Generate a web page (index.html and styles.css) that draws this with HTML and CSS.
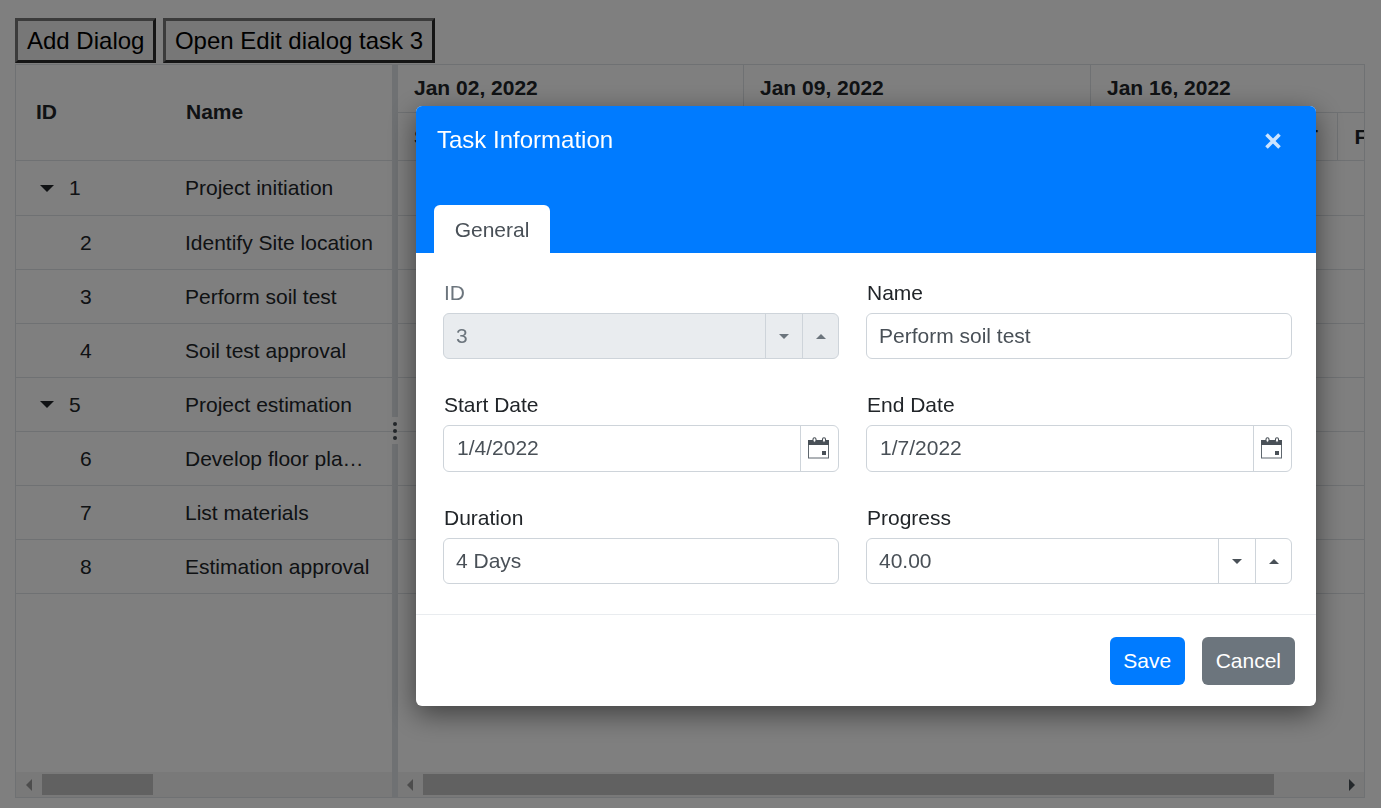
FILE: index.html
```html
<!DOCTYPE html>
<html lang="en">
<head>
    <meta charset="UTF-8">
    <title>Gantt dialog</title>
    <link rel="stylesheet" href="styles.css">
</head>
<body>

    <div class="toolbar">
        <button class="plain-btn">Add Dialog</button>
        <button class="plain-btn">Open Edit dialog task 3</button>
    </div>

    <div class="gantt">
        <div class="tree-panel">
            <div class="tree-head">
                <div class="col-id">ID</div>
                <div class="col-name">Name</div>
            </div>
            <div class="tree-body">
                <div class="tree-row"><div class="col-id parent"><span class="caret"></span>1</div><div class="col-name">Project initiation</div></div>
                <div class="tree-row"><div class="col-id child">2</div><div class="col-name">Identify Site location</div></div>
                <div class="tree-row"><div class="col-id child">3</div><div class="col-name">Perform soil test</div></div>
                <div class="tree-row"><div class="col-id child">4</div><div class="col-name">Soil test approval</div></div>
                <div class="tree-row"><div class="col-id parent"><span class="caret"></span>5</div><div class="col-name">Project estimation</div></div>
                <div class="tree-row"><div class="col-id child">6</div><div class="col-name">Develop floor pla…</div></div>
                <div class="tree-row"><div class="col-id child">7</div><div class="col-name">List materials</div></div>
                <div class="tree-row"><div class="col-id child">8</div><div class="col-name">Estimation approval</div></div>
            </div>
            <div class="scrollbar">
                <span class="arrow-left"></span>
                <div class="thumb thumb-tree"></div>
            </div>
        </div>

        <div class="splitter">
            <div class="split-handle"><i></i><i></i><i></i></div>
        </div>

        <div class="chart-panel">
            <div class="chart-head">
                <div class="weeks">
                    <div class="week">Jan 02, 2022</div>
                    <div class="week">Jan 09, 2022</div>
                    <div class="week">Jan 16, 2022</div>
                </div>
                <div class="days">
                    <div class="day">S</div><div class="day"></div><div class="day"></div><div class="day"></div><div class="day"></div><div class="day"></div><div class="day"></div>
                    <div class="day"></div><div class="day"></div><div class="day"></div><div class="day"></div><div class="day"></div><div class="day"></div><div class="day"></div>
                    <div class="day"></div><div class="day"></div><div class="day"></div><div class="day"></div><div class="day">T</div><div class="day">F</div>
                </div>
            </div>
            <div class="tree-body">
                <div class="tree-row"></div>
                <div class="tree-row"></div>
                <div class="tree-row"></div>
                <div class="tree-row"></div>
                <div class="tree-row"></div>
                <div class="tree-row"></div>
                <div class="tree-row"></div>
                <div class="tree-row"></div>
            </div>
            <div class="scrollbar scrollbar-chart">
                <span class="arrow-left"></span>
                <div class="thumb thumb-chart"></div>
                <span class="arrow-right"></span>
            </div>
        </div>
    </div>

    <div class="overlay">
        <div class="dialog">
            <div class="dialog-header">
                <div class="dialog-title">
                    <span>Task Information</span>
                    <svg class="close-icon" width="18" height="18" viewBox="0 0 18 18"><path d="M2.500 2.500L15.500 15.500M15.500 2.500L2.500 15.500" stroke="#cce4ff" stroke-width="3.6" fill="none"/></svg>
                </div>
                <div class="tab">General</div>
            </div>

            <div class="dialog-body">
                <div class="field">
                    <label class="label-off">ID</label>
                    <div class="input-group group-off">
                        <input type="text" value="3" disabled>
                        <span class="spin"><span class="tri-down"></span></span>
                        <span class="spin"><span class="tri-up"></span></span>
                    </div>
                </div>
                <div class="field">
                    <label>Name</label>
                    <div class="input-group"><input type="text" value="Perform soil test"></div>
                </div>
                <div class="field">
                    <label>Start Date</label>
                    <div class="input-group date-group">
                        <input type="text" value="1/4/2022">
                        <span class="cal">
                            <svg width="22" height="22" viewBox="0 0 22 22">
                                <rect x="0.500" y="3.500" width="20" height="17.500" fill="none" stroke="#5f676e"/>
                                <rect x="0" y="3" width="21" height="5" fill="#495057"/>
                                <rect x="5" y="0.700" width="3" height="4.600" rx="1.500" fill="#fff" stroke="#495057" stroke-width="1.100"/>
                                <rect x="14.500" y="0.700" width="3" height="4.600" rx="1.500" fill="#fff" stroke="#495057" stroke-width="1.100"/>
                                <rect x="14" y="14" width="4" height="4" fill="#495057"/>
                            </svg>
                        </span>
                    </div>
                </div>
                <div class="field">
                    <label>End Date</label>
                    <div class="input-group date-group">
                        <input type="text" value="1/7/2022">
                        <span class="cal">
                            <svg width="22" height="22" viewBox="0 0 22 22">
                                <rect x="0.500" y="3.500" width="20" height="17.500" fill="none" stroke="#5f676e"/>
                                <rect x="0" y="3" width="21" height="5" fill="#495057"/>
                                <rect x="5" y="0.700" width="3" height="4.600" rx="1.500" fill="#fff" stroke="#495057" stroke-width="1.100"/>
                                <rect x="14.500" y="0.700" width="3" height="4.600" rx="1.500" fill="#fff" stroke="#495057" stroke-width="1.100"/>
                                <rect x="14" y="14" width="4" height="4" fill="#495057"/>
                            </svg>
                        </span>
                    </div>
                </div>
                <div class="field">
                    <label>Duration</label>
                    <div class="input-group"><input type="text" value="4 Days"></div>
                </div>
                <div class="field">
                    <label>Progress</label>
                    <div class="input-group">
                        <input type="text" value="40.00">
                        <span class="spin"><span class="tri-down"></span></span>
                        <span class="spin"><span class="tri-up"></span></span>
                    </div>
                </div>
            </div>

            <div class="dialog-footer">
                <button class="btn btn-save">Save</button>
                <button class="btn btn-cancel">Cancel</button>
            </div>
        </div>
    </div>

</body>
</html>
```

FILE: styles.css
```css
html, body {
    height: 100%;
}
body {
    margin: 0;
    padding: 18px 15px 0;
    box-sizing: border-box;
    overflow: hidden;
    background-color: #fff;
    font-family: "Liberation Sans", Arial, sans-serif;
    color: #212529;
}
.toolbar {
    display: flex;
    gap: 7px;
    height: 46px;
}
.plain-btn {
    height: 45px;
    padding: 0 8.500px 0 9px;
    font-family: "Liberation Sans", Arial, sans-serif;
    font-size: 24px;
    color: #000;
    background-color: #efefef;
    border: 3px solid;
    border-color: #767676 #2b2b2b #2b2b2b #767676;
}
.gantt {
    display: flex;
    width: 1350px;
    height: 734px;
    box-sizing: border-box;
    border: 1px solid #dee2e6;
}
.tree-panel {
    width: 376px;
    display: flex;
    flex-direction: column;
}
.chart-panel {
    flex: 1;
    min-width: 0;
    display: flex;
    flex-direction: column;
    overflow: hidden;
}
.tree-head {
    height: 96px;
    box-sizing: border-box;
    display: flex;
    align-items: center;
    padding-bottom: 2px;
    border-bottom: 1px solid #dee2e6;
    font-size: 21px;
    font-weight: bold;
}
.tree-head .col-id {
    padding-left: 20px;
}
.tree-head .col-name {
    padding-left: 20px;
}
.tree-body {
    flex: 1;
}
.tree-row {
    height: 54px;
    box-sizing: border-box;
    display: flex;
    align-items: center;
    border-bottom: 1px solid #dee2e6;
    font-size: 21px;
}
.tree-row:first-child {
    height: 55px;
}
.col-id {
    width: 150px;
    box-sizing: border-box;
    flex-shrink: 0;
}
.col-id.child {
    padding-left: 64px;
}
.col-id.parent {
    display: flex;
    align-items: center;
    padding-left: 24px;
}
.col-name {
    padding-left: 19px;
    white-space: nowrap;
}
.caret {
    width: 0;
    height: 0;
    margin-right: 15px;
    border-left: 7.500px solid transparent;
    border-right: 7.500px solid transparent;
    border-top: 7px solid #212529;
}
.scrollbar {
    height: 25px;
    flex-shrink: 0;
    display: flex;
    align-items: center;
    background-color: #f3f3f3;
}
.thumb {
    height: 21px;
    background-color: #c2c2c2;
}
.thumb-tree {
    width: 111px;
    margin-left: 10px;
}
.thumb-chart {
    width: 851px;
    margin-left: 10px;
}
.scrollbar-chart .arrow-left {
    margin-left: 9px;
}
.scrollbar-chart .arrow-right {
    margin-left: 75px;
}
.arrow-left, .arrow-right {
    width: 0;
    height: 0;
    border-top: 6px solid transparent;
    border-bottom: 6px solid transparent;
}
.arrow-left {
    margin-left: 10px;
    border-right: 6px solid #9a9a9a;
}
.arrow-right {
    border-left: 6px solid #495057;
}
.splitter {
    position: relative;
    width: 6px;
    background-color: #dee2e6;
    flex-shrink: 0;
}
.split-handle {
    position: absolute;
    left: 0;
    top: 352px;
    width: 6px;
    height: 27px;
    background-color: #fff;
    display: flex;
    flex-direction: column;
    align-items: center;
    justify-content: center;
    gap: 3px;
}
.split-handle::before {
    content: "";
    position: absolute;
    left: 0;
    right: 0;
    top: 14px;
    height: 1px;
    background-color: #dee2e6;
}
.split-handle i {
    position: relative;
    width: 4px;
    height: 4px;
    border-radius: 50%;
    background-color: #495057;
}
.chart-head {
    height: 96px;
    box-sizing: border-box;
    flex-shrink: 0;
    border-bottom: 1px solid #dee2e6;
    margin-left: -1px;
    width: 1100px;
    font-weight: bold;
    font-size: 21px;
}
.weeks {
    display: flex;
    height: 48px;
    box-sizing: border-box;
    border-bottom: 1px solid #dee2e6;
}
.week {
    width: 347px;
    box-sizing: border-box;
    flex-shrink: 0;
    padding-left: 16px;
    line-height: 46px;
    border-right: 1px solid #dee2e6;
}
.week:first-child {
    padding-left: 17px;
}
.days {
    display: flex;
    height: 47px;
}
.day {
    width: 49.500px;
    box-sizing: border-box;
    flex-shrink: 0;
    padding-left: 17px;
    line-height: 47px;
    border-right: 1px solid #dee2e6;
}
.chart-panel .tree-row {
    width: 100%;
}
.overlay {
    position: fixed;
    left: 0;
    top: 0;
    right: 0;
    bottom: 0;
    background-color: rgba(0,0,0,0.5);
}
.dialog {
    position: absolute;
    left: 416px;
    top: 106px;
    width: 900px;
    height: 600px;
    display: flex;
    flex-direction: column;
    background-color: #fff;
    border-radius: 6px;
    box-shadow: 0 8px 28px rgba(0,0,0,0.5);
}
.dialog-header {
    height: 147px;
    display: flex;
    flex-direction: column;
    justify-content: space-between;
    box-sizing: border-box;
    padding: 20px 0 0 18px;
    background-color: #007bff;
    border-radius: 6px 6px 0 0;
}
.dialog-title {
    display: flex;
    justify-content: space-between;
    align-items: center;
    padding: 0 34px 0 3px;
    color: #fff;
    font-size: 24px;
}
.close-icon {
    position: relative;
    top: 1px;
}
.tab {
    width: 116px;
    height: 48px;
    box-sizing: border-box;
    line-height: 50px;
    text-align: center;
    font-size: 21px;
    color: #495057;
    background-color: #fff;
    border-radius: 6px 6px 0 0;
}
.dialog-body {
    display: grid;
    grid-template-columns: 396px 426px;
    grid-template-rows: 112px 113px 112px;
    column-gap: 27px;
    padding: 28px 0 0 27px;
    height: 362px;
    box-sizing: border-box;
    border-bottom: 1px solid #e9ecef;
}
.field label {
    display: block;
    height: 32px;
    padding-left: 1px;
    line-height: 23px;
    font-size: 21px;
    color: #212529;
}
.field .label-off {
    color: #6c757d;
}
.input-group {
    display: flex;
    height: 46px;
    box-sizing: border-box;
    border: 1px solid #ced4da;
    border-radius: 6px;
    overflow: hidden;
}
.input-group input {
    flex: 1;
    min-width: 0;
    border: 0;
    padding: 0 12px;
    font-family: "Liberation Sans", Arial, sans-serif;
    font-size: 21px;
    color: #495057;
    background-color: transparent;
}
.date-group {
    height: 47px;
}
.date-group input {
    padding: 0 12px 2px 13px;
}
.group-off {
    background-color: #e9ecef;
}
.group-off input {
    color: #6c757d;
}
.spin {
    width: 37px;
    box-sizing: border-box;
    flex-shrink: 0;
    display: flex;
    align-items: center;
    justify-content: center;
    padding-right: 1px;
    border-left: 1px solid #ced4da;
}
.spin:last-child {
    width: 36px;
    padding-right: 0;
}
.tri-down, .tri-up {
    width: 0;
    height: 0;
    border-left: 5.500px solid transparent;
    border-right: 5.500px solid transparent;
}
.tri-down {
    border-top: 5.500px solid #495057;
}
.tri-up {
    border-bottom: 5.500px solid #495057;
}
.group-off .tri-down {
    border-top-color: #6c757d;
}
.group-off .tri-up {
    border-bottom-color: #6c757d;
}
.cal {
    width: 37px;
    flex-shrink: 0;
    display: flex;
    align-items: center;
    justify-content: center;
    border-left: 1px solid #ced4da;
}
.cal svg {
    margin: 0 1px 1px 0;
}
.dialog-footer {
    flex: 1;
    display: flex;
    justify-content: flex-end;
    align-items: flex-start;
    gap: 17px;
    padding: 22px 21px 0 0;
}
.btn {
    height: 48px;
    border: 0;
    border-radius: 6px;
    padding: 0 13.500px;
    color: #fff;
    font-family: "Liberation Sans", Arial, sans-serif;
    font-size: 21px;
}
.btn-save {
    background-color: #007bff;
}
.btn-cancel {
    padding: 0 14px;
    background-color: #6c757d;
}
```
